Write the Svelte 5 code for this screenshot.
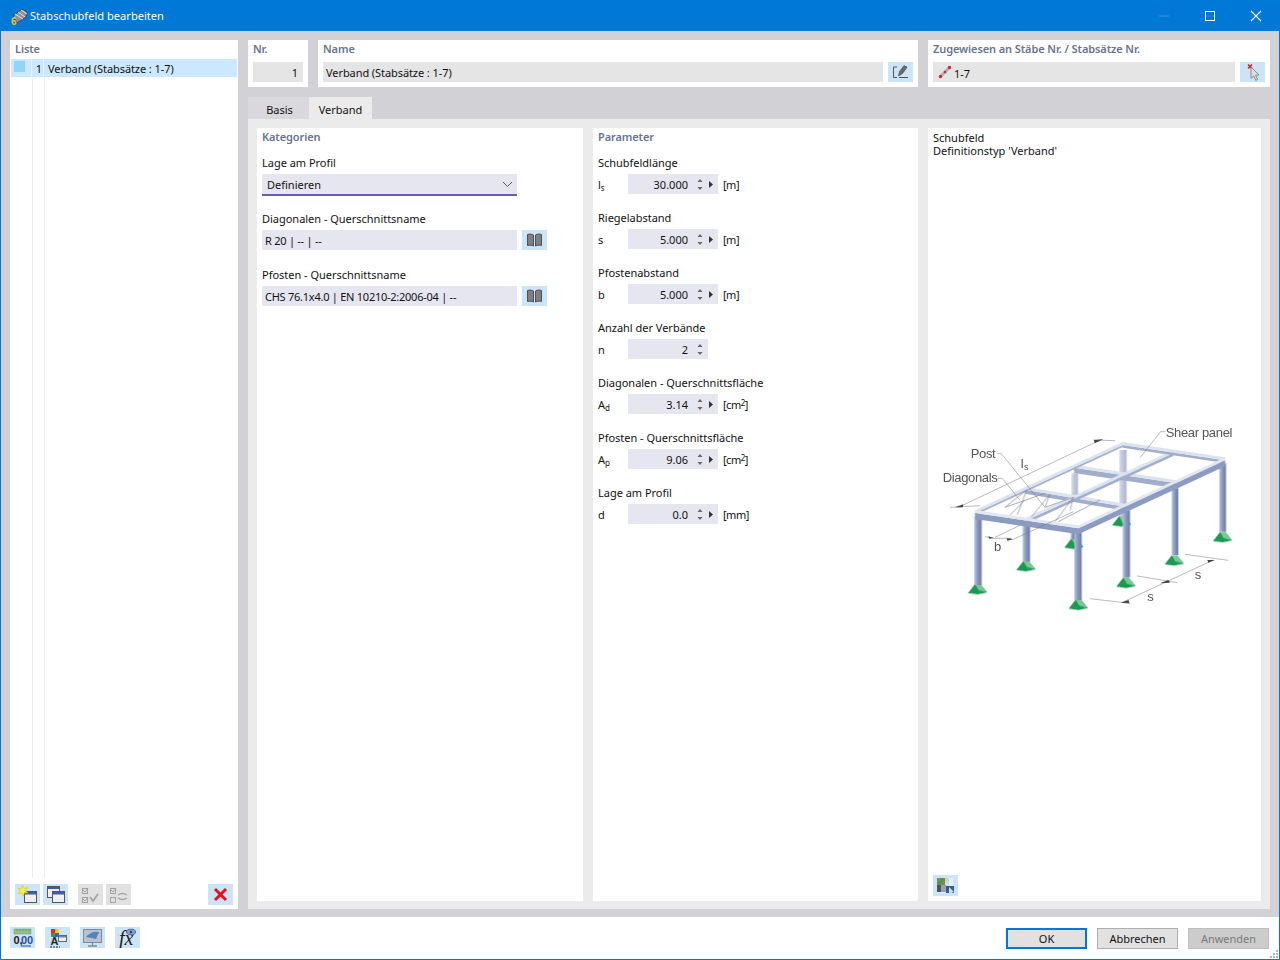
<script>
	// right-hand parameter column
	const params = [
		{ label: 'Schubfeldlänge', sym: 'l', sub: 's', value: '30.000', unit: '[m]', arrow: true },
		{ label: 'Riegelabstand', sym: 's', value: '5.000', unit: '[m]', arrow: true },
		{ label: 'Pfostenabstand', sym: 'b', value: '5.000', unit: '[m]', arrow: true },
		{ label: 'Anzahl der Verbände', sym: 'n', value: '2', arrow: false },
		{ label: 'Diagonalen - Querschnittsfläche', sym: 'A', sub: 'd', value: '3.14', unit: '[cm', sup: '2', arrow: true },
		{ label: 'Pfosten - Querschnittsfläche', sym: 'A', sub: 'p', value: '9.06', unit: '[cm', sup: '2', arrow: true },
		{ label: 'Lage am Profil', sym: 'd', value: '0.0', unit: '[mm]', arrow: true }
	];

	const footings = [[143, 506], [288, 437], [432, 370], [445, 553], [575, 303], [588, 487], [733, 420], [878, 350]];
	const posts = [
		[568, 90, 590, 290, 0.55], [424, 160, 444, 240, 0.55],
		[133, 290, 155, 495, 1], [278, 312, 300, 425, 1], [422, 335, 434, 358, 1], [433, 335, 455, 540, 1],
		[578, 272, 600, 472, 1], [725, 205, 745, 405, 1], [868, 130, 888, 335, 1]
	];
	// x1, y1, x2, y2, depth of the visible side face
	const beams = [
		[285, 200, 590, 252, 12], [432, 134, 737, 180, 16], [290, 292, 730, 90, 9],
		[578, 66, 885, 112, 8], [135, 270, 578, 66, 6]
	];
	const frontBeams = [[135, 270, 445, 316, 18], [445, 316, 885, 112, 18]];
	const diagonals = [
		[225, 262, 290, 210], [290, 210, 262, 285], [305, 290, 360, 222], [360, 222, 345, 262], [345, 262, 430, 232],
		[375, 305, 430, 232], [430, 232, 420, 272], [385, 305, 510, 240], [225, 262, 345, 220], [240, 285, 285, 240]
	];

	const beamTop = (b) => `${b[0]},${b[1]} ${b[2]},${b[3]} ${b[2]},${b[3] + 9} ${b[0]},${b[1] + 9}`;
	const beamSide = (b) => `${b[0]},${b[1] + 9} ${b[2]},${b[3] + 9} ${b[2]},${b[3] + 9 + b[4]} ${b[0]},${b[1] + 9 + b[4]}`;
</script>

{#snippet book()}
	<svg width="25" height="20" viewBox="0 0 25 20">
		<path d="M5.5 4.500c2-.6 4.500-.6 6 .5v11c-1.500-1-4-1.100-6-.5zM19.500 4.500c-2-.6-4.500-.6-6 .5v11c1.500-1 4-1.100 6-.5z" fill="#7d7f84" stroke="#4f5155" />
	</svg>
{/snippet}

<div class="window">
	<header class="titlebar">
		<svg class="appicon" width="20" height="20" viewBox="0 0 20 20">
			<path d="M4 10 L13 3 L18 6 L17 11 L8 17 Z" fill="#8b8f98" stroke="#3d4250" stroke-width="1" />
			<path d="M6 8 L14 13 M9 6 L16 11 M12 4 L18 8" stroke="#e4e6ea" stroke-width="1" />
			<text x="2" y="19" class="six">6</text>
		</svg>
		<span class="wintitle">Stabschubfeld bearbeiten</span>
		<div class="winbtns">
			<svg width="12" height="12" viewBox="0 0 12 12"><path d="M1 6h10" stroke="#3d97e2" /></svg>
			<svg width="12" height="12" viewBox="0 0 12 12"><rect x="1.5" y="1.5" width="9" height="9" fill="none" stroke="#fff" /></svg>
			<svg width="12" height="12" viewBox="0 0 12 12"><path d="M1 1l10 10M11 1L1 11" stroke="#fff" stroke-width="1.1" /></svg>
		</div>
	</header>

	<div class="body">
		<aside class="list">
			<div class="cap">Liste</div>
			<div class="row">
				<span class="cell"><span class="swatch"></span></span>
				<span class="num">1</span>
				<span class="rowtext">Verband (Stabsätze : 1-7)</span>
			</div>
			<div class="tree"><i></i><i></i></div>
			<div class="listtools">
				<button class="ib" aria-label="Neu">
					<svg width="25" height="21" viewBox="0 0 25 21">
						<rect x="9.500" y="7.500" width="12" height="11" fill="#efefef" stroke="#555" />
						<rect x="10" y="8" width="11" height="2.500" fill="#3b5fa8" />
						<path d="M7.500 1l1.500 3.500 3.500-1-1.900 3.200 2.400 2.300-3.500-.2-1.200 3.500-1.500-3.400-3.500.8 2-3-2.400-2.600 3.600.4z" fill="#f8f03a" stroke="#cdbb18" stroke-width=".5" />
					</svg>
				</button>
				<button class="ib" aria-label="Kopieren">
					<svg width="25" height="21" viewBox="0 0 25 21">
						<rect x="4.500" y="2.500" width="12" height="11" fill="#efefef" stroke="#555" />
						<rect x="5" y="3" width="11" height="2" fill="#3b5fa8" />
						<rect x="9.500" y="7.500" width="12" height="11" fill="#efefef" stroke="#555" />
						<rect x="10" y="8" width="11" height="2.500" fill="#3b5fa8" />
					</svg>
				</button>
				<span class="sp1"></span>
				<button class="ib off" aria-label="Alle prüfen">
					<svg width="25" height="21" viewBox="0 0 25 21" fill="none" stroke="#a4a4a4">
						<rect x="4.500" y="4.500" width="5" height="5" /><rect x="4.500" y="13.500" width="5" height="5" />
						<path d="M5 6l2 2 3-4M5 15l2 2 3-4" /><path d="M12 13l3 4 5-7" stroke-width="1.800" />
					</svg>
				</button>
				<button class="ib off" aria-label="Umkehren">
					<svg width="25" height="21" viewBox="0 0 25 21" fill="none" stroke="#a4a4a4">
						<rect x="4.500" y="4.500" width="5" height="5" /><rect x="4.500" y="13.500" width="5" height="5" />
						<path d="M5 6l2 2 3-4" /><path d="M12 11c3-2 6-2 9 0M12 14c3 2 6 2 9 0" stroke-width="1.400" />
					</svg>
				</button>
				<span class="grow"></span>
				<button class="ib" aria-label="Löschen">
					<svg width="25" height="21" viewBox="0 0 25 21"><path d="M7 5l11 11M18 5L7 16" stroke="#e8101a" stroke-width="3" /></svg>
				</button>
			</div>
		</aside>

		<main class="main">
			<div class="top">
				<section class="box">
					<div class="cap">Nr.</div>
					<div class="ro right">1</div>
				</section>
				<section class="box">
					<div class="cap">Name</div>
					<div class="fieldrow">
						<div class="ro grow">Verband (Stabsätze : 1-7)</div>
						<button class="ib" aria-label="Bearbeiten">
							<svg width="25" height="20" viewBox="0 0 25 20" fill="none">
								<path d="M9 5H5.500v10.500H9M11 15.500h9M17 5h2" stroke="#555" />
								<path d="M10.500 14l1-4.500 4.500-6 3 2-4.500 6z" fill="#6a6a6a" stroke="#444" stroke-width=".6" />
							</svg>
						</button>
					</div>
				</section>
				<section class="box">
					<div class="cap">Zugewiesen an Stäbe Nr. / Stabsätze Nr.</div>
					<div class="fieldrow">
						<div class="ro grow assigned">
							<svg width="14" height="14" viewBox="0 0 14 14">
								<path d="M2 12L12 2" stroke="#a9afbd" stroke-width="3" />
								<circle cx="2.500" cy="11.500" r="1.700" fill="#d8232a" /><circle cx="7" cy="7" r="1.300" fill="#d8232a" /><circle cx="11.500" cy="2.500" r="1.700" fill="#d8232a" />
							</svg>
							<span>1-7</span>
						</div>
						<button class="ib" aria-label="Auswählen">
							<svg width="25" height="20" viewBox="0 0 25 20">
								<path d="M8 2.500l4 4M12 2.500l-4 4" stroke="#e8101a" stroke-width="1.500" />
								<path d="M11 5l8 8-3.400.2 2 4.300-1.900.8-1.900-4.300-2.800 2.400z" fill="#dedede" stroke="#777" stroke-width=".8" />
							</svg>
						</button>
					</div>
				</section>
			</div>

			<nav class="tabs">
				<span class="tab">Basis</span>
				<span class="tab active">Verband</span>
			</nav>

			<div class="content">
				<section class="pane">
					<div class="cap">Kategorien</div>
					<div class="lbl first combolbl">Lage am Profil</div>
					<div class="combo">
						<span>Definieren</span>
						<svg width="11" height="7" viewBox="0 0 11 7"><path d="M1 1l4.500 4.500L10 1" fill="none" stroke="#555" /></svg>
					</div>
					<div class="lbl l2">Diagonalen - Querschnittsname</div>
					<div class="fieldrow">
						<div class="inp">R 20 | -- | --</div>
						<button class="ib" aria-label="Bibliothek">{@render book()}</button>
					</div>
					<div class="lbl l3">Pfosten - Querschnittsname</div>
					<div class="fieldrow">
						<div class="inp">CHS 76.1x4.0 | EN 10210-2:2006-04 | --</div>
						<button class="ib" aria-label="Bibliothek">{@render book()}</button>
					</div>
				</section>

				<section class="pane">
					<div class="cap">Parameter</div>
					{#each params as p, i}
						<div class="lbl" class:first={i === 0} class:next={i > 0}>{p.label}</div>
						<div class="param">
							<span class="sym">{p.sym}{#if p.sub}<sub>{p.sub}</sub>{/if}</span>
							<div class="spin" class:short={!p.arrow}>
								<span class="val">{p.value}</span>
								<svg class="updown" width="6" height="13" viewBox="0 0 6 13"><path d="M3 1l2.500 3h-5zM3 12L.5 9h5z" fill="#666" /></svg>
								{#if p.arrow}
									<svg class="more" width="4" height="7" viewBox="0 0 4 7"><path d="M0 0l4 3.500L0 7z" fill="#333" /></svg>
								{/if}
							</div>
							{#if p.unit}<span class="unit">{p.unit}{#if p.sup}<sup>{p.sup}</sup>]{/if}</span>{/if}
						</div>
					{/each}
				</section>

				<section class="pane figure">
					<div class="figtext">Schubfeld<br />Definitionstyp 'Verband'</div>
					<svg class="frame" width="320" height="200" viewBox="0 0 960 600">
						<defs>
							<linearGradient id="post" x1="0" x2="1" y1="0" y2="0">
								<stop offset="0" stop-color="#b6c1da" /><stop offset=".5" stop-color="#8494bb" /><stop offset="1" stop-color="#6c7ca6" />
							</linearGradient>
							<filter id="soft"><feGaussianBlur stdDeviation="1" /></filter>
						</defs>
						<g filter="url(#soft)">
							{#each footings as f}
								<polygon points="{f[0] - 29},{f[1] + 13} {f[0] - 8},{f[1] - 14} {f[0] + 8},{f[1] - 14} {f[0] + 29},{f[1] + 11} {f[0]},{f[1] + 17}" fill="#1f9a55" />
								<polygon points="{f[0] - 8},{f[1] - 14} {f[0] + 8},{f[1] - 14} {f[0] + 29},{f[1] + 11} {f[0] + 3},{f[1] + 4}" fill="#7cc796" />
							{/each}
							{#each posts as p}
								<rect x={p[0]} y={p[1]} width={p[2] - p[0]} height={p[3] - p[1]} fill="url(#post)" opacity={p[4]} />
							{/each}
							{#each beams as b}
								<polygon points={beamSide(b)} fill="#a0aecb" />
								<polygon points={beamTop(b)} fill="#dde3ee" />
							{/each}
							{#each diagonals as d}
								<line x1={d[0]} y1={d[1]} x2={d[2]} y2={d[3]} stroke="#868da0" stroke-width="2.200" />
							{/each}
							{#each frontBeams as b}
								<polygon points={beamSide(b)} fill="#8b9bc1" />
								<polygon points={beamTop(b)} fill="#e3e7f0" />
							{/each}
						</g>
						<g fill="none" stroke="#6a6a6a" stroke-width="1.400">
							<path d="M60 262l90-5M85 262L515 58M490 60l65 2" />
							<path d="M202 101h12L345 262M202 175h15l52 65" />
							<path d="M630 113l62-78h14" />
							<path d="M165 350l28 5h52M195 352l75-36M250 358L430 275" />
							<path d="M480 536l120 14M575 548L850 420M622 468l120 20M765 403l130 18" />
						</g>
						<g fill="#444">
							<polygon points="75,262 100,253 98,262" /><polygon points="520,58 494,70 492,60" />
							<polygon points="192,354 175,349 178,356" /><polygon points="250,358 230,354 232,362" />
							<polygon points="572,548 596,540 598,550" /><polygon points="690,490 715,480 720,488" /><polygon points="855,420 835,428 832,420" />
						</g>
						<g class="figlabels">
							<text x="122" y="113">Post</text>
							<text x="38" y="185">Diagonals</text>
							<text x="707" y="50">Shear panel</text>
							<text x="272" y="143">l</text><text x="282" y="151" class="small">s</text>
							<text x="192" y="392">b</text>
							<text x="652" y="542">s</text>
							<text x="794" y="478">s</text>
						</g>
					</svg>
					<div class="figtools">
						<button class="ib" aria-label="Bild">
							<svg width="25" height="21" viewBox="0 0 25 21">
								<rect x="4" y="3" width="16" height="15" fill="#e6edf0" />
								<rect x="4" y="3" width="8" height="7" fill="#7d8a55" /><path d="M6 9l4-5" stroke="#35a03a" stroke-width="2" />
								<rect x="12" y="3" width="4" height="4" fill="#c9d6c4" /><rect x="12" y="7" width="4" height="4" fill="#d5dde2" />
								<rect x="4" y="10" width="4" height="7" fill="#4d525c" /><rect x="8" y="10" width="5" height="7" fill="#9aa2ad" />
								<rect x="13" y="11" width="8" height="7" fill="#2f5f94" />
								<path d="M16 12l5 5-2 .2 1 2-1 .4-1-2-2 1.400z" fill="#d6dde6" />
							</svg>
						</button>
					</div>
				</section>
			</div>
		</main>
	</div>

	<footer class="footer">
		<button class="ib f" aria-label="Zahlenformat">
			<svg width="25" height="21" viewBox="0 0 25 21">
				<rect x="4" y="2" width="17" height="5" fill="#8fc27a" stroke="#6e9e5d" stroke-width=".5" />
				<path d="M7 2v2M10 2v2M13 2v2M16 2v2M19 2v2" stroke="#5f8a4e" stroke-width=".7" />
				<text x="3.500" y="17" class="mini">0,</text><text x="11" y="17" class="mini blue">00</text>
				<path d="M11 19h10" stroke="#2a4fa0" />
			</svg>
		</button>
		<button class="ib f" aria-label="Farben">
			<svg width="25" height="21" viewBox="0 0 25 21">
				<rect x="6" y="2" width="4" height="4" fill="#d9282f" /><rect x="10" y="2" width="4" height="4" fill="#f0d020" />
				<rect x="6" y="6" width="4" height="4" fill="#3a9a45" /><rect x="10" y="6" width="4" height="4" fill="#3b5fc0" />
				<text x="5.500" y="18" class="mini">A</text><path d="M5 20h10" stroke="#222" stroke-dasharray="2 1" />
				<rect x="13.500" y="8.500" width="8" height="6" fill="#eee" stroke="#666" /><rect x="14" y="9" width="7" height="1.500" fill="#6b85b8" />
			</svg>
		</button>
		<button class="ib f" aria-label="Ansicht">
			<svg width="25" height="21" viewBox="0 0 25 21">
				<rect x="3.500" y="2.500" width="18" height="13" fill="#b9c3cf" stroke="#7f8a96" />
				<path d="M6 10c3-4 8-6 13-5l-3 7c-3-1-7-1-10-2z" fill="#4f86bd" />
				<path d="M12.500 15.500v3M8 19h9" stroke="#7f8a96" stroke-width="1.300" />
			</svg>
		</button>
		<button class="ib f" aria-label="Formel">
			<svg width="25" height="21" viewBox="0 0 25 21">
				<text x="4" y="18" class="fx">fx</text>
				<ellipse cx="16" cy="5" rx="4.500" ry="2.800" fill="#8ea0d4" stroke="#3b4c8a" stroke-width=".8" />
				<circle cx="16" cy="5" r="1.300" fill="#2b3a78" />
			</svg>
		</button>
		<span class="grow"></span>
		<button class="btn ok">OK</button>
		<button class="btn">Abbrechen</button>
		<button class="btn dis">Anwenden</button>
		<svg class="grip" width="10" height="10" viewBox="0 0 10 10" fill="#b5b5b5">
			<rect x="7" y="1" width="2" height="2" /><rect x="4" y="4" width="2" height="2" /><rect x="7" y="4" width="2" height="2" />
			<rect x="1" y="7" width="2" height="2" /><rect x="4" y="7" width="2" height="2" /><rect x="7" y="7" width="2" height="2" />
		</svg>
	</footer>
</div>

<style>
	:global(body) {
		margin: 0;
	}

	.window {
		position: relative;
		box-sizing: border-box;
		width: 1280px;
		height: 960px;
		display: flex;
		flex-direction: column;
		border: 1px solid #0078d7;
		border-top: 0;
		background: #d2d1d6;
		font-family: 'Noto Sans', 'Open Sans', sans-serif;
		font-size: 11px;
		line-height: 14px;
		color: #111;
	}

	.titlebar {
		height: 31px;
		flex: none;
		margin: 0 -1px;
		background: #0078d7;
		display: flex;
		align-items: center;
		padding-left: 9px;
		color: #fff;
	}

	.six {
		font: bold 10px 'Liberation Sans', sans-serif;
		fill: #f2c230;
	}

	.wintitle {
		margin-left: 1px;
		font-size: 11px;
		letter-spacing: 0.05px;
	}

	.winbtns {
		margin-left: auto;
		display: flex;
		gap: 34px;
		padding-right: 18px;
	}

	.body {
		flex: 1;
		min-height: 0;
		display: flex;
		gap: 10px;
		padding: 9px 9px 8px;
	}

	.list {
		width: 228px;
		flex: none;
		background: #fff;
		display: flex;
		flex-direction: column;
	}

	.cap {
		font-weight: 600;
		color: #67748f;
		height: 14px;
		letter-spacing: -0.1px;
		white-space: nowrap;
	}

	.list .cap {
		margin: 2px 5px 3px;
	}

	.row {
		height: 18px;
		margin: 0 1px;
		background: #cce8ff;
		display: flex;
		align-items: stretch;
	}

	.cell {
		border-right: 1px solid #e6f4ff;
		padding: 2px 0 0 3px;
		box-sizing: border-box;
		flex: none;
		width: 21px;
	}

	.swatch {
		display: block;
		width: 11px;
		height: 11px;
		background: #8fd6f8;
	}

	.num {
		width: 12px;
		box-sizing: border-box;
		border-right: 1px solid #e6f4ff;
		text-align: right;
		padding-right: 1px;
		line-height: 19px;
		flex: none;
	}

	.rowtext {
		margin-left: 4px;
		line-height: 19px;
		letter-spacing: -0.08px;
	}

	.tree {
		flex: 1;
		display: flex;
		padding-left: 22px;
		gap: 11px;
	}

	.tree i {
		width: 1px;
		background: #ececec;
	}

	.listtools {
		height: 31px;
		box-sizing: border-box;
		display: flex;
		padding: 6px 5px 0;
		gap: 3px;
	}

	.sp1 {
		width: 4px;
	}

	.grow {
		flex: 1;
	}

	.ib {
		width: 25px;
		height: 21px;
		flex: none;
		padding: 0;
		border: 0;
		background: #cce4f7;
		display: block;
	}

	.ib svg {
		display: block;
	}

	.ib.off {
		background: #e1e1e1;
	}

	.main {
		flex: 1;
		min-width: 0;
		display: flex;
		flex-direction: column;
	}

	.top {
		height: 47px;
		flex: none;
		display: grid;
		grid-template-columns: 60px 600px 342px;
		gap: 10px;
	}

	.box {
		background: #fff;
		padding: 2px 5px 0;
	}

	.box .cap {
		margin-bottom: 6px;
	}

	.ro {
		height: 20px;
		background: #e5e5e5;
		line-height: 21px;
		padding: 0 3px;
		box-sizing: border-box;
		letter-spacing: -0.08px;
	}

	.right {
		text-align: right;
		padding-right: 5px;
	}

	.fieldrow {
		display: flex;
		gap: 5px;
	}

	.fieldrow .ib {
		height: 20px;
	}

	.assigned {
		display: flex;
		align-items: center;
		gap: 2px;
		padding-left: 5px;
	}

	.assigned span {
		padding-top: 2px;
	}

	.tabs {
		flex: none;
		margin-top: 10px;
		height: 22px;
		display: flex;
	}

	.tab {
		width: 61px;
		box-sizing: border-box;
		padding-left: 2px;
		text-align: center;
		line-height: 26px;
		background: #d9d9dd;
	}

	.tab.active {
		width: 63px;
		padding-left: 0;
		background: #ebebeb;
	}

	.content {
		flex: 1;
		min-height: 0;
		background: #ebebeb;
		padding: 9px 9px 8px;
		display: grid;
		grid-template-columns: 326px 325px 333px;
		gap: 10px;
	}

	.pane {
		background: #fff;
		padding: 2px 5px 0;
		min-height: 0;
	}

	.lbl {
		height: 14px;
		white-space: nowrap;
		letter-spacing: -0.02px;
	}

	.lbl.first {
		margin-top: 12px;
		margin-bottom: 4px;
	}

	.lbl.l2 {
		margin-top: 16px;
		margin-bottom: 4px;
	}

	.lbl.l3 {
		margin-top: 18px;
		margin-bottom: 4px;
	}

	.lbl.next {
		margin-top: 17px;
		margin-bottom: 4px;
	}

	.combo {
		width: 255px;
		height: 22px;
		box-sizing: border-box;
		background: #e6e6f0;
		border-bottom: 2px solid #6a5eab;
		display: flex;
		align-items: center;
		justify-content: space-between;
		padding: 1px 4px 0 5px;
	}

	.inp {
		width: 255px;
		height: 20px;
		box-sizing: border-box;
		background: #e6e6f0;
		padding: 0 3px;
		line-height: 21px;
		letter-spacing: -0.25px;
	}

	.param {
		height: 20px;
		display: flex;
		align-items: center;
	}

	.sym {
		width: 30px;
		padding-top: 2px;
	}

	sub {
		font-size: 8px;
		line-height: 0;
		vertical-align: -2px;
	}

	.spin {
		width: 90px;
		height: 20px;
		background: #e6e6f0;
		display: flex;
		align-items: center;
		box-sizing: border-box;
		padding-left: 4px;
	}

	.spin.short {
		width: 80px;
	}

	.val {
		width: 56px;
		text-align: right;
		padding-top: 2px;
	}

	.updown {
		margin-left: 9px;
	}

	.more {
		margin-left: 6px;
	}

	.unit {
		margin-left: 5px;
		padding-top: 1px;
		letter-spacing: -0.5px;
	}

	sup {
		font-size: 8px;
		line-height: 0;
		vertical-align: 3px;
	}

	.figure {
		display: flex;
		flex-direction: column;
		padding-top: 3px;
	}

	.figtext {
		height: 26px;
		line-height: 13px;
	}

	.frame {
		display: block;
		margin: 263px 0 0 -3px;
	}

	.figtools {
		margin-top: auto;
		padding-bottom: 5px;
	}

	.figlabels text {
		font: 39px 'Liberation Sans', sans-serif;
		fill: #555;
		letter-spacing: -1px;
	}

	.figlabels .small {
		font-size: 27px;
	}

	.footer {
		height: 42px;
		flex: none;
		background: #fff;
		display: flex;
		align-items: flex-start;
		padding: 10px 10px 0 9px;
		box-sizing: border-box;
	}

	.ib.f {
		margin-right: 10px;
	}

	.mini {
		font: bold 11px 'Liberation Sans', sans-serif;
		fill: #222;
	}

	.mini.blue {
		fill: #2a4fa0;
	}

	.fx {
		font: italic 20px 'Liberation Serif', serif;
		fill: #222;
	}

	.btn {
		width: 81px;
		height: 21px;
		margin: 1px 0 0 10px;
		padding: 0;
		box-sizing: border-box;
		background: #e1e1e1;
		border: 1px solid #adadad;
		font: inherit;
		color: #111;
	}

	.btn.ok {
		border: 2px solid #0078d7;
	}

	.btn.dis {
		background: #cccccc;
		color: #7a7a7a;
		border-color: #bfbfbf;
	}

	/* the size grip sits over the corner */
	.grip {
		position: absolute;
		right: 0;
		bottom: 0;
	}
</style>
